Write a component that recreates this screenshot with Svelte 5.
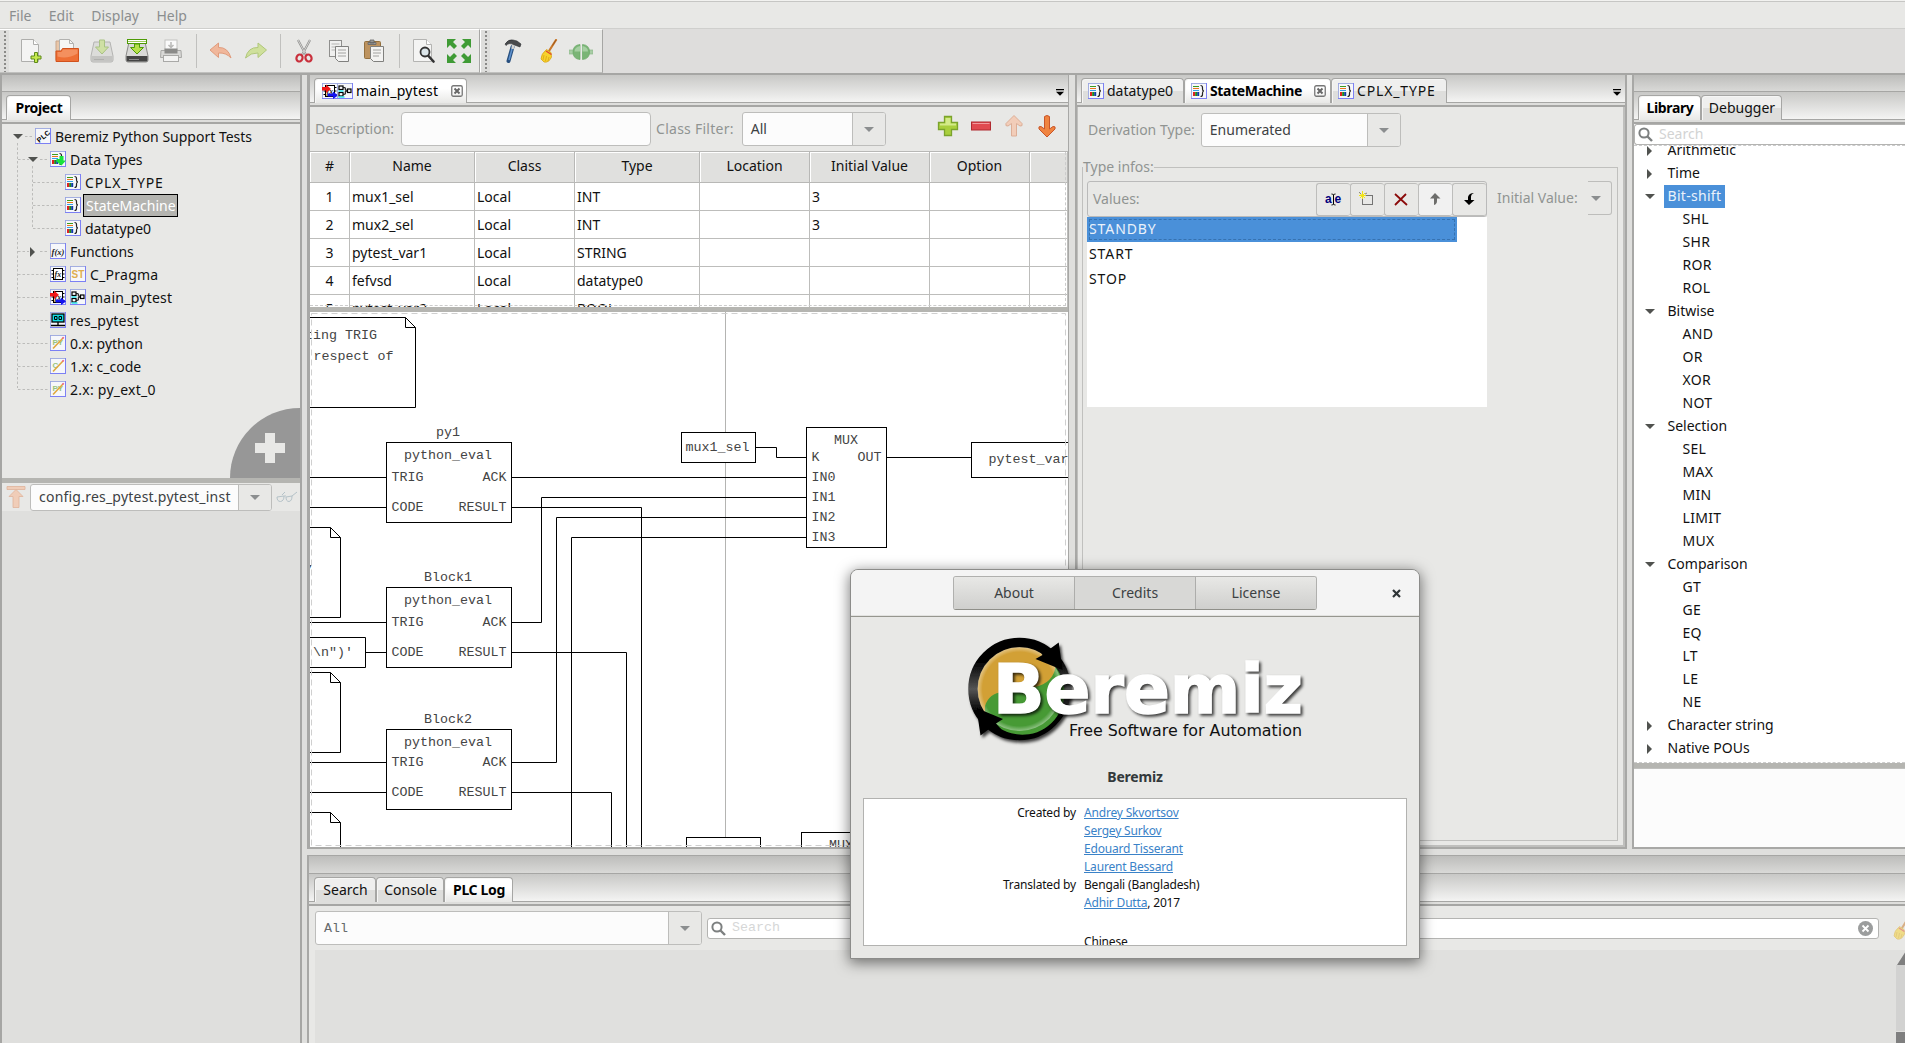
<script>
  const menus = ['File', 'Edit', 'Display', 'Help'];
  const mainTools = ['new', 'open', 'save', 'saveas', 'print', '|', 'undo', 'redo', '|', 'cut', 'copy', 'paste', '|', 'find', 'full'];
  const buildTools = ['hammer', 'brush', 'connect'];

  const project = [
    { level: 0, arrow: 'down', icons: ['plc'], text: 'Beremiz Python Support Tests' },
    { level: 1, arrow: 'down', icons: ['types'], text: 'Data Types' },
    { level: 2, icons: ['type'], text: 'CPLX_TYPE', spread: 'wide' },
    { level: 2, icons: ['type'], text: 'StateMachine', selected: true },
    { level: 2, icons: ['type'], text: 'datatype0' },
    { level: 1, arrow: 'right', icons: ['fx'], text: 'Functions' },
    { level: 1, icons: ['fb', 'st'], text: 'C_Pragma', spread: 'loose' },
    { level: 1, icons: ['prog', 'fbd'], text: 'main_pytest', spread: 'loose' },
    { level: 1, icons: ['res'], text: 'res_pytest', spread: 'loose' },
    { level: 1, icons: ['py'], text: '0.x: python' },
    { level: 1, icons: ['c'], text: '1.x: c_code' },
    { level: 1, icons: ['py'], text: '2.x: py_ext_0', spread: 'loose' }
  ];

  const columns = ['#', 'Name', 'Class', 'Type', 'Location', 'Initial Value', 'Option', ''];
  const variables = [
    ['1', 'mux1_sel', 'Local', 'INT', '', '3', '', ''],
    ['2', 'mux2_sel', 'Local', 'INT', '', '3', '', ''],
    ['3', 'pytest_var1', 'Local', 'STRING', '', '', '', ''],
    ['4', 'fefvsd', 'Local', 'datatype0', '', '', '', ''],
    ['5', 'pytest_var2', 'Local', 'BOOL', '', '', '', '']
  ];

  const values = ['STANDBY', 'START', 'STOP'];
  const valueTools = ['rename', 'add', 'remove', 'up', 'down'];

  const library = [
    { arrow: 'right', text: 'Arithmetic' },
    { arrow: 'right', text: 'Time' },
    { arrow: 'down', text: 'Bit-shift', selected: true },
    { text: 'SHL' }, { text: 'SHR' }, { text: 'ROR' }, { text: 'ROL' },
    { arrow: 'down', text: 'Bitwise' },
    { text: 'AND' }, { text: 'OR' }, { text: 'XOR' }, { text: 'NOT' },
    { arrow: 'down', text: 'Selection' },
    { text: 'SEL' }, { text: 'MAX' }, { text: 'MIN' }, { text: 'LIMIT' }, { text: 'MUX' },
    { arrow: 'down', text: 'Comparison' },
    { text: 'GT' }, { text: 'GE' }, { text: 'EQ' }, { text: 'LT' }, { text: 'LE' }, { text: 'NE' },
    { arrow: 'right', text: 'Character string' },
    { arrow: 'right', text: 'Native POUs' }
  ];

  const blocks = [
    { name: 'py1', y: 442.5, trig: 477.5, code: 507.5 },
    { name: 'Block1', y: 587.5, trig: 622.5, code: 652.5 },
    { name: 'Block2', y: 729.5, trig: 762.5, code: 792.5 }
  ];

  const credits = [
    { role: 'Created by', link: 'Andrey Skvortsov' },
    { link: 'Sergey Surkov' },
    { link: 'Edouard Tisserant' },
    { link: 'Laurent Bessard' },
    { role: 'Translated by', plain: 'Bengali (Bangladesh)' },
    { link: 'Adhir Dutta', plain: ', 2017' },
    {},
    { plain: 'Chinese' }
  ];
</script>

{#snippet broom()}
  <path d="M20 1 L13 12" stroke="#c8782a" stroke-width="2.2" stroke-linecap="round" />
  <path d="M20 1 L16.5 6.5" stroke="#a05a1c" stroke-width="1" />
  <path d="M10.5 10.5 L15 13.5 L15.5 18 Q13 24 8 23 L5 20 Q5 15 10.5 10.5Z" fill="#f7d22c" stroke="#d8a413" stroke-width=".8" />
  <path d="M10 12 L15.5 15.5" stroke="#d43" stroke-width="1.3" />
  <path d="M8 16 L7 21 M10.5 17 L9.5 22 M13 18 L12 22" stroke="#d9a515" stroke-width=".8" />
{/snippet}

{#snippet floppy(faded)}
  <path d="M4 3 h16 l3 14 v4 q0 2 -2 2 H3 q-2 0 -2 -2 v-4Z" fill={faded ? '#dcdcda' : '#d9d9d7'} stroke={faded ? '#b4b4b2' : '#8a8a88'} />
  <path d="M1.5 17 h21 v4 q0 1.5 -1.5 1.5 H3 q-1.500 0 -1.500 -1.500Z" fill={faded ? '#c4c4c2' : '#444'} />
  <path d="M4 20.500 h10" stroke={faded ? '#b0b0ae' : '#888'} />
  {#if !faded}<rect x="2.500" y=".5" width="19" height="4" fill="#fff" stroke="#4e9a06" /><path d="M3 2.500 h18" stroke="#9cc95c" stroke-width="1" />{/if}
  <path d={faded ? 'M9.500 1 h5 v7 h4 l-6.500 7 l-6.500 -7 h4Z' : 'M9.500 5 h5 v3.500 h4 l-6.500 6.500 l-6.500 -6.500 h4Z'} fill={faded ? '#cfe0a4' : '#b5e04a'} stroke={faded ? '#a9c283' : '#4e9a06'} />
{/snippet}

{#snippet tool(name)}
  <svg class="tool" viewBox="0 0 24 24" fill="none">
    {#if name === 'new'}
      <path d="M1.500 .5 h12 l5 5 v17 h-17Z" fill="#f4f4f3" stroke="#aeaeac" /><path d="M13.500 .5 v5 h5" fill="#fff" stroke="#aeaeac" />
      <path d="M14.500 13.500 h3 v3.500 h3.500 v3 h-3.500 v3.500 h-3 v-3.500 h-3.500 v-3 h3.500Z" fill="#c5e84e" stroke="#5e8a1a" />
    {:else if name === 'open'}
      <path d="M1 21 V2 h6 l2 2 h3" fill="#e9c6a8" stroke="#c9a58a" /><path d="M4.500 .5 h10 l4 4 v8 H4.500Z" fill="#f6f6f5" stroke="#b2b2b0" /><path d="M14.500 .5 v4 h4" stroke="#b2b2b0" />
      <path d="M1 22.500 V12 h5 l1.500 -2.500 H23.500 v13Z" fill="#ee6f35" stroke="#d1521d" /><path d="M8 10.500 H22.500 v4 q-10 6 -20 3 v-4.500 h4Z" fill="#f9a77c" opacity=".6" />
    {:else if name === 'save'}{@render floppy(true)}
    {:else if name === 'saveas'}{@render floppy(false)}
    {:else if name === 'print'}
      <rect x="5" y="1" width="12" height="11" fill="#fafafa" stroke="#c2c2c0" /><path d="M11 3 v5 m-2.500 -2 l2.500 2.500 l2.500 -2.500" stroke="#b8b8b6" stroke-width="1.500" />
      <path d="M1 11.500 h20 l.5 7 h-21Z" fill="#d8d8d6" stroke="#a9a9a7" /><rect x="4.500" y="9.500" width="13" height="5" fill="#8b8b89" /><rect x="3.500" y="16.500" width="15" height="6" fill="#f3f3f2" stroke="#a9a9a7" />
    {:else if name === 'undo'}
      <path d="M1 11 L9.500 4 v4.500 Q19 8 22 19 Q17 13.500 9.500 14 V18.500Z" fill="#f0b79b" stroke="#e09b7c" stroke-linejoin="round" />
    {:else if name === 'redo'}
      <path d="M22.500 11 L14 4 v4.500 Q4 8 1.500 19 Q7 13.500 14 14 V18.500Z" fill="#cfe09c" stroke="#b0c77a" stroke-linejoin="round" />
    {:else if name === 'cut'}
      <path d="M5 1 L13.500 17 M17 1 L8.500 17" stroke="#8d8d8b" stroke-width="2.200" /><path d="M5 1 L13 16 M17 1 L9 16" stroke="#e6e6e4" stroke-width=".8" />
      <ellipse cx="6.500" cy="19" rx="3" ry="3.500" transform="rotate(25 6.500 19)" stroke="#c9303c" stroke-width="2.200" /><ellipse cx="15.500" cy="19" rx="3" ry="3.500" transform="rotate(-25 15.500 19)" stroke="#c9303c" stroke-width="2.200" />
    {:else if name === 'copy'}
      <rect x="1.500" y="1.500" width="12" height="16" fill="#f0f0ef" stroke="#8f8f8d" /><path d="M3.500 5 h8 M3.500 8 h8 M3.500 11 h8" stroke="#b5b5b3" />
      <path d="M7.500 7.500 h13 v15 h-10 l-3 -3Z" fill="#f3f3f2" stroke="#80807e" /><path d="M10 11 h8 M10 14 h8 M10 17 h8" stroke="#a2a2a0" />
    {:else if name === 'paste'}
      <rect x="1.500" y="2.500" width="16" height="17" rx="1" fill="#bd935f" stroke="#93703f" /><path d="M5 3.500 h8 v2 H5Z M7 1 h4 v3 H7Z" fill="#989896" stroke="#666" stroke-width=".8" />
      <path d="M7.500 7.500 h13 v15 h-10 l-3 -3Z" fill="#f3f3f2" stroke="#80807e" /><path d="M10 11 h8 M10 14 h8 M10 17 h6" stroke="#a2a2a0" />
    {:else if name === 'find'}
      <path d="M1.500 .5 h13 l5 5 v17 h-18Z" fill="#f4f4f3" stroke="#b4b4b2" /><path d="M14.500 .5 v5 h5" fill="#fff" stroke="#b4b4b2" />
      <circle cx="13" cy="13" r="4.500" fill="#dce6ea" stroke="#333" stroke-width="1.800" /><path d="M16.500 17 L21.500 22.500" stroke="#333" stroke-width="2.600" stroke-linecap="round" />
    {:else if name === 'full'}
      <path d="M0 0 h9 l-3 3 l4 4 l-3 3 l-4 -4 l-3 3Z M24 0 v9 l-3 -3 l-4 4 l-3 -3 l4 -4 l-3 -3Z M0 24 v-9 l3 3 l4 -4 l3 3 l-4 4 l3 3Z M24 24 h-9 l3 -3 l-4 -4 l3 -3 l4 4 l3 -3Z" fill="#3f9b35" />
    {:else if name === 'hammer'}
      <path d="M11.500 8 L7.500 22" stroke="#28507f" stroke-width="4" stroke-linecap="round" /><path d="M11 10 L8 21" stroke="#5f93cf" stroke-width="1.500" /><path d="M12.500 4 L11.500 10" stroke="#d4d4d2" stroke-width="2.500" />
      <path d="M4 5 Q7 0 12 1 L16 2 L20 5 L19 8 L13.500 6 Q8 3 5 6.500Z" fill="#484a4c" stroke="#2c2e30" stroke-width=".6" />
    {:else if name === 'brush'}{@render broom()}
    {:else}
      <path d="M0 11 h5 v4 H0Z M19 11 h5 v4 h-5Z" fill="#a8cda5" stroke="#8db98a" stroke-width=".7" />
      <path d="M11 5.500 v15 Q4 20 4 13 Q4 6 11 5.500Z M13.500 5.500 v15 Q20.500 20 20.500 13 Q20.500 6 13.500 5.500Z" fill="#7ab576" stroke="#69a865" stroke-width=".7" /><path d="M11 7 Q5.500 8 5.500 12.500 H11Z M13.500 7 Q19 8 19 12.500 H13.500Z" fill="#a5cfa2" />
    {/if}
  </svg>
{/snippet}

{#snippet mini(name)}
  <svg class="mini" viewBox="0 0 16 16" fill="none">
    <rect x=".5" y=".5" width="15" height="15" fill="#f6f7fa" stroke="#7c80f4" /><path d="M.5 15 V.5 H15" stroke="#a3aee0" />
    {#if name === 'plc'}
      <text class="plc" x="-7.500" y="3" textLength="15" transform="translate(8 8) rotate(-40)">PLC</text>
    {:else if name === 'type' || name === 'types'}
      <path d="M2 3.500 h6" stroke="#3b9a1e" /><path d="M2 5.500 h6" stroke="#e8761c" /><path d="M2 7.500 h6" stroke="#35a0e8" />
      <rect x="2" y="9" width="2.200" height="4" fill="#d22" /><rect x="4.200" y="9" width="2" height="4" fill="#1d8a1d" /><rect x="6.200" y="9" width="2" height="4" fill="#113ba5" />
      <path d="M9.500 2.500 q2 0 2 2 v1.500 q0 2 1.500 2 q-1.500 0 -1.500 2 v1.500 q0 2 -2 2" stroke="#222" stroke-width="1.200" />
      {#if name === 'types'}<path d="M6.500 8 h3 v-3 h4 v4.500 h2.500 l-4.500 5 l-5 -4Z" fill="#17e33c" />{/if}
    {:else if name === 'fx'}
      <text class="fx" x="1.500" y="11.500" textLength="13" lengthAdjust="spacingAndGlyphs">f(x)</text>
    {:else if name === 'fb' || name === 'prog'}
      <rect x="3.500" y="2.500" width="9" height="11" fill="#fff" stroke="#000" /><path d="M1.500 4.500 h2 M1.500 8 h2 M1.500 11.500 h2 M12.500 4.500 h2 M12.500 8 h2 M12.500 11.500 h2" stroke="#000" /><text class="fxs" x="4.500" y="10.500">fx</text>
      {#if name === 'prog'}<path d="M0 4 h4 V1.500 l5 4.500 l-5 4 V7.500 H0Z" fill="#f01818" /><path d="M6 10.500 h5 v-2 l5 4 l-5 3.500 v-2.500 H6Z" fill="#1414f0" />{/if}
    {:else if name === 'st'}
      <text class="st" x="1.500" y="12">ST</text>
    {:else if name === 'fbd'}
      <rect x="2" y="3" width="4" height="3.500" stroke="#000" stroke-width="1.200" /><rect x="2" y="9.500" width="4" height="3.500" fill="#fff" stroke="#000" stroke-width="1.200" /><path d="M1.500 8 h5 M1.500 14 h6" stroke="#2ee6ee" stroke-width="1.500" /><rect x="10.500" y="6" width="3.500" height="3.500" stroke="#000" stroke-width="1.200" /><path d="M6 4.700 h2.300 v2.500 h2 M6 11.200 h2.300 v-3 h2" stroke="#000" />
    {:else if name === 'res'}
      <rect x="2" y="2" width="12" height="8" fill="#13dce4" stroke="#000" stroke-width="1.300" /><path d="M4.500 4.500 h2.500 v3 h-2.500Z M9 4.500 h2.500 v3 h-2.500Z" stroke="#000" /><path d="M8 10 v3.500 M1 13.500 h14" stroke="#000" stroke-width="1.300" />
    {:else}
      <text class="py" x="2.500" y="9.500">{name === 'py' ? 'PY' : 'C'}</text><path d="M3 13.500 L13 3" stroke="#e0a83c" stroke-width="1.600" /><path d="M12.500 3.500 l1.200 -1.300" stroke="#e58" stroke-width="1.600" />
    {/if}
  </svg>
{/snippet}

{#snippet closeBox()}
  <svg class="close-box" viewBox="0 0 12 12" fill="none"><rect x=".75" y=".75" width="10.500" height="10.500" rx="1.500" stroke="#777" stroke-width="1.300" /><path d="M3.500 3.500 l5 5 M8.500 3.500 l-5 5" stroke="#666" stroke-width="2" /></svg>
{/snippet}

{#snippet lens()}
  <svg class="lens" viewBox="0 0 15 15" fill="none"><circle cx="6" cy="6" r="4.600" stroke="#7d8080" stroke-width="2" /><path d="M9.500 9.500 L14 14" stroke="#7d8080" stroke-width="2.400" /></svg>
{/snippet}

{#snippet tabMenu()}
  <svg class="tab-menu" viewBox="0 0 8 7"><path d="M0 0 h8 v1.300 H0Z M0 2.700 h8 L4 6.700Z" /></svg>
{/snippet}

{#snippet note(right, top, bottom)}
  <path class="node" d="M300 {top} H{right - 10} L{right} {top + 10} V{bottom} H300 M{right - 10} {top} v10 h10" />
{/snippet}

<div class="app">
  <nav class="menubar">
    {#each menus as m}<span>{m}</span>{/each}
  </nav>

  <div class="toolbars">
    <div class="toolbar first">
      <i class="grip"></i>
      {#each mainTools as t}
        {#if t === '|'}<i class="sep"></i>{:else}{@render tool(t)}{/if}
      {/each}
    </div>
    <div class="toolbar second">
      <i class="grip"></i>
      {#each buildTools as t}{@render tool(t)}{/each}
    </div>
  </div>

  <div class="workspace">
    <aside class="left">
      <div class="caption"></div>
      <div class="tabs low"><span class="tab active bold t-proj">Project</span></div>
      <div class="tree">
        <svg class="guides" width="80" height="300" viewBox="0 0 80 300" fill="none">
          <path d="M15.500 19 V264 M23 12.500 h9 M30.500 42 V104 M31 58.500 h32 M31 81.500 h32 M31 104.500 h32 M38 35.500 h9 M16 35.500 h11 M16 127.500 h11 M38 127.500 h9 M16 150.500 h31 M16 173.500 h31 M16 196.500 h31 M16 219.500 h31 M16 242.500 h31 M16 265.500 h31" />
        </svg>
        {#each project as row}
          <div class="node-row l{row.level}">
            <span class="twist">{#if row.arrow}<i class={row.arrow}></i>{/if}</span>
            <span class="icons">{#each row.icons as ic}{@render mini(ic)}{/each}</span>
            <span class="label {row.spread ?? ''}" class:picked={row.selected}>{row.text}</span>
          </div>
        {/each}
        <svg class="add-corner" width="70" height="70" viewBox="0 0 70 70"><path d="M0 70 A70 70 0 0 1 70 0 V70Z" fill="#979797" /><path d="M35 25 h10 v10 h10 v10 h-10 v10 h-10 v-10 h-10 v-10 h10Z" fill="#e8e8e6" /></svg>
      </div>
      <div class="hsash"></div>
      <div class="instance">
        <svg width="20" height="24" viewBox="0 0 20 24"><path d="M1 1.500 h18 v3 H1Z M10 4.500 l7 7 h-4 v11 h-6 v-11 h-4Z" fill="#f0cdb8" stroke="#dfb39b" stroke-width=".8" /></svg>
        <div class="combo inst"><span class="val">config.res_pytest.pytest_inst</span><span class="drop"><i class="down"></i></span></div>
        <svg width="22" height="12" viewBox="0 0 22 12" fill="none" stroke="#b5c2c8"><path d="M1 6 l7 -1 q0 5 -3.500 5.500 q-3.500 0 -3.500 -4.500Z M10 6 l6 -1 q0 5 -3 5.500 q-3 0 -3 -4.500Z M8 5 h2 M16 5 L21 1 M6 4 L9 1" /></svg>
      </div>
    </aside>

    <div class="right-side">
      <div class="top-row">
        <section class="pane editor">
          <div class="tabs">
            <span class="tab active main-tab"><span class="pair">{@render mini('prog')}{@render mini('fbd')}</span><span class="loose">main_pytest</span>{@render closeBox()}</span>
            {@render tabMenu()}
          </div>
          <div class="var-bar">
            <span class="dim">Description:</span><div class="field desc"></div>
            <span class="dim loose">Class Filter:</span>
            <div class="combo filter"><span class="val">All</span><span class="drop"><i class="down"></i></span></div>
            <div class="var-tools">
              <svg width="22" height="22" viewBox="0 0 22 22"><path d="M7.500 1.500 h7 v6 h6 v7 h-6 v6 h-7 v-6 h-6 v-7 h6Z" fill="#a9cf3d" stroke="#7ba32d" stroke-width="1.300" /><path d="M8.500 3 h5 v5.500 h5.500 v2 H3 v-2 h5.500Z" fill="#d3ea8a" /></svg>
              <svg width="22" height="22" viewBox="0 0 22 22"><rect x="1.500" y="7" width="19" height="8" fill="#e04a50" stroke="#b02a30" /><path d="M2.500 8.500 h17" stroke="#f29a9d" /></svg>
              <svg width="22" height="22" viewBox="0 0 22 22"><path d="M11 .5 L19 8.500 q1 3 -2 2.500 L13.500 8.500 V21 h-5 V8.500 L5 11 q-3 .5 -2 -2.500Z" fill="#f2cdb9" stroke="#dcae97" /></svg>
              <svg width="22" height="22" viewBox="0 0 22 22"><path d="M11 22 L19 14 q1 -3 -2 -2.500 L13.500 14 V1.500 q-2.500 -2 -5 0 V14 L5 11.500 q-3 -.5 -2 2.500Z" fill="#f08440" stroke="#c8562a" /></svg>
            </div>
          </div>
          <div class="grid">
            {#each columns as c}<div class="head">{c}</div>{/each}
            {#each variables as row}{#each row as cell, i}<div class="cell" class:num={i === 0}>{cell}</div>{/each}{/each}
          </div>
          <div class="hsash"></div>
          <svg class="diagram" width="758" height="535" viewBox="310 312 758 535" fill="none">
            <path d="M725.500 312 V838" stroke="#b4b4b2" />
            {@render note(415.5, 317.5, 407.5)}
            {@render note(340.5, 527.5, 617.5)}
            {@render note(340.5, 672.5, 752.5)}
            {@render note(340.5, 812.5, 860)}
            <path class="node" d="M300 637.500 H365.500 V667.500 H300 M365.500 652.500 H386.500 M300 477.500 H386.500 M300 507.500 H386.500 M300 622.500 H386.500 M300 762.500 H386.500 M300 792.500 H386.500" />
            <path class="wire" d="M511.500 477.500 H806.500 M511.500 507.500 H641.500 V850 M511.500 622.500 H541.500 V497.500 H806.500 M511.500 652.500 H626.500 V850 M511.500 762.500 H556.500 V517.500 H806.500 M511.500 792.500 H611.500 V850 M571.500 850 V537.500 H806.500 M755.500 447.500 H776.500 V457.500 H806.500 M886.500 457.500 H971.500" />
            <text x="305" y="338.500">ting TRIG</text><text x="313.500" y="360">respect of</text>
            <text x="307" y="567">,</text><text x="313" y="656">\n")'</text>
            {#each blocks as b}
              <rect class="node" x="386.500" y={b.y} width="125" height="80" />
              <text class="mid" x="448" y={b.y - 7}>{b.name}</text><text class="mid" x="448" y={b.y + 16}>python_eval</text>
              <text x="391.500" y={b.trig + 3.5}>TRIG</text><text class="end" x="506.500" y={b.trig + 3.5}>ACK</text>
              <text x="391.500" y={b.code + 3.5}>CODE</text><text class="end" x="506.500" y={b.code + 3.5}>RESULT</text>
            {/each}
            <rect class="node" x="681.500" y="432.500" width="74" height="30" /><text x="685.500" y="450.500">mux1_sel</text>
            <rect class="node" x="806.500" y="427.500" width="80" height="120" /><text class="mid" x="846" y="443.500">MUX</text>
            <text x="811.500" y="460.500">K</text><text class="end" x="881.500" y="460.500">OUT</text>
            {#each [0, 1, 2, 3] as n}<text x="811.500" y={480.5 + n * 20}>IN{n}</text>{/each}
            <rect class="node" x="971.500" y="442.500" width="120" height="35" /><text x="988.500" y="462.500">pytest_var</text>
            <rect class="node" x="686.500" y="837.500" width="74" height="30" /><rect class="node" x="801.500" y="832.500" width="80" height="60" /><text x="829" y="848.500">MUX</text>
            <rect class="overflow" x="311.500" y="313.500" width="754" height="532" />
          </svg>
        </section>

        <section class="pane types">
          <div class="tabs">
            <span class="tab t-a">{@render mini('type')}<span>datatype0</span></span>
            <span class="tab active bold t-b">{@render mini('type')}<span>StateMachine</span>{@render closeBox()}</span>
            <span class="tab t-c">{@render mini('type')}<span class="wide">CPLX_TYPE</span></span>
            {@render tabMenu()}
          </div>
          <div class="type-body">
            <div class="derive"><span class="dim">Derivation Type:</span><div class="combo enumr"><span class="val">Enumerated</span><span class="drop"><i class="down"></i></span></div></div>
            <fieldset>
              <legend class="dim">Type infos:</legend>
              <div class="values">
                <div class="values-bar">
                  <span class="dim">Values:</span>
                  {#each valueTools as t}
                    <span class="vbtn" class:off={t === 'up'}>
                      <svg width="18" height="16" viewBox="0 0 18 16" fill="none">
                        {#if t === 'rename'}<text class="ren" x="1" y="12">a</text><text class="ren" x="10.500" y="12">e</text><path d="M7.500 3 h1 l1 1 l1 -1 h1 M9.500 4 v9 M7.500 14 h1 l1 -1 l1 1 h1" stroke="#000" />
                        {:else if t === 'add'}<rect x="4.500" y="4.500" width="10" height="9" stroke="#000" stroke-dasharray="1 1" /><path d="M1.500 2 L7 7 M7 2 L2 7 M4.500 0 v8 M1 4.500 h7" stroke="#f2e410" stroke-width="1" /><path d="M1 1 l2 2 M7 3 l2 -1" stroke="#888" />
                        {:else if t === 'remove'}<path d="M3 3 L15 14 M14 3 L3 14" stroke="#8b0a0a" stroke-width="1.800" />
                        {:else if t === 'up'}<path d="M9 2 L14.500 7.500 H11 V10 q0 3 -3 4 V7.500 H4Z" fill="#6d6d6b" />
                        {:else}<path d="M9 14 L14.500 9 H11 V6 q0 -3 3 -4 q-5 0 -6 4 V9 H4Z" fill="#000" />{/if}
                      </svg>
                    </span>
                  {/each}
                </div>
                <div class="value-list">
                  {#each values as v, i}<div class="value" class:sel={i === 0}>{v}</div>{/each}
                </div>
              </div>
              <span class="dim initial">Initial Value:</span>
              <span class="stub"><i class="down"></i></span>
            </fieldset>
          </div>
        </section>

        <aside class="pane library">
          <div class="caption"></div>
          <div class="tabs low"><span class="tab active bold t-lib">Library</span><span class="tab t-deb">Debugger</span></div>
          <div class="lib-search">{@render lens()}<span>Search</span></div>
          <div class="lib-tree">
            {#each library as row}
              <div class="lib-row"><span class="twist">{#if row.arrow}<i class={row.arrow}></i>{/if}</span><span class="lib-label" class:child={!row.arrow} class:sel={row.selected}>{row.text}</span></div>
            {/each}
          </div>
          <div class="hsash"></div>
          <div class="lib-info"></div>
        </aside>
      </div>

      <section class="bottom">
        <div class="caption"></div>
        <div class="tabs low"><span class="tab b-a">Search</span><span class="tab b-b">Console</span><span class="tab active bold b-c">PLC Log</span></div>
        <div class="log-bar">
          <div class="combo level"><span class="val mono">All</span><span class="drop"><i class="down"></i></span></div>
          <div class="log-search">{@render lens()}<span class="mono ghost">Search</span>
            <svg class="clear" width="15" height="15" viewBox="0 0 15 15"><circle cx="7.500" cy="7.500" r="7.500" fill="#9b9d9d" /><path d="M4.500 4.500 l6 6 M10.500 4.500 l-6 6" stroke="#fff" stroke-width="1.800" /></svg>
          </div>
          <svg class="broom" width="24" height="24" viewBox="0 0 24 24" fill="none">{@render broom()}</svg>
        </div>
        <div class="log">
          <svg width="9" height="93" viewBox="0 0 9 93"><rect y="15" width="9" height="66" fill="#d2d2d1" /><path d="M1 15 L10 1 V15Z M0 82 h9 v11 H0Z" fill="#7f7f7f" /></svg>
        </div>
      </section>
    </div>
  </div>

  <div class="dialog">
    <header>
      <div class="switch"><span>About</span><span class="on">Credits</span><span>License</span></div>
      <svg class="x" width="9" height="9" viewBox="0 0 9 9"><path d="M1 1 L8 8 M8 1 L1 8" stroke="#2e3436" stroke-width="2.200" /></svg>
    </header>
    <div class="brand">
      <svg width="350" height="124" viewBox="960 630 350 124">
        <defs>
          <filter id="drop" x="-20%" y="-20%" width="150%" height="150%"><feDropShadow dx="2" dy="2.500" stdDeviation="1.700" flood-color="#000" flood-opacity=".75" /></filter>
          <linearGradient id="ring" x1="0" y1="0" x2="0" y2="1"><stop offset="0" /><stop offset=".2" /><stop offset=".5" stop-color="#555" /><stop offset=".75" /><stop offset="1" /></linearGradient>
          <radialGradient id="glow"><stop offset=".88" stop-color="#fff" stop-opacity="0" /><stop offset="1" stop-color="#fff" stop-opacity=".4" /></radialGradient>
          <clipPath id="outside"><path d="M1035 630 H1310 V754 H1035Z" /></clipPath>
        </defs>
        <g filter="url(#drop)">
          <circle cx="1019.500" cy="689" r="46.500" fill="#d2a036" stroke="url(#ring)" stroke-width="9.500" />
          <path d="M1055.500 667 Q1053 683 1035 687 L1003 692 Q989 693 985 706 V712 A42 42 0 1 0 1055.500 667Z" fill="#479a36" />
          <circle cx="1019.500" cy="689" r="42" fill="url(#glow)" />
          <path d="M1046 648 L1050.500 648.500 L1058.700 642.500 L1062.500 670 L1035.500 659 L1042.500 655 L1039 650Z M993 730 L989 729 L980.500 735.500 L976.500 708 L1003 719 L996 723.500 L1001 729Z" fill="#000" />
        </g>
        <text class="logo" x="993" y="713" textLength="310" lengthAdjust="spacingAndGlyphs"><tspan>B</tspan><tspan>eremiz</tspan></text>
        <text class="slogan" x="1069" y="735.500" textLength="233" lengthAdjust="spacingAndGlyphs">Free Software for Automation</text>
      </svg>
      <strong>Beremiz</strong>
    </div>
    <div class="credits">
      {#each credits as c}
        <span class="role">{c.role ?? ''}</span><span class="who">{#if c.link}<a href="#top">{c.link}</a>{/if}{c.plain ?? ''}</span>
      {/each}
    </div>
  </div>
</div>

<style>
  :global(body) { margin: 0; overflow: hidden; }
  .app { position: relative; width: 1905px; height: 1043px; overflow: hidden; display: flex; flex-direction: column; background: #dfdfdd; font: 14px/20px "Noto Sans", sans-serif; color: #111; box-sizing: border-box; }
  .app :global(*) { box-sizing: border-box; }
  svg { flex: none; display: block; }
  span { white-space: nowrap; }
  .dim { color: #909492; }
  .bold { font-weight: 700; letter-spacing: -.35px; }
  .mono { font-family: "Liberation Mono", monospace; font-size: 13.33px; }
  .loose { letter-spacing: .25px; }
  .wide { letter-spacing: .85px; }

  .menubar { flex: none; height: 29px; display: flex; gap: 17.400px; padding: 6px 0 0 9px; background: #e8e8e6; color: #8b8e8f; border-bottom: 1px solid #cfcfcd; box-shadow: inset 0 1px #f2f2f0, inset 0 2px #c6c6c4; }
  .toolbars { flex: none; height: 46px; display: flex; border-bottom: 2px solid #a6a6a4; background: #dedddc; }
  .toolbar { display: flex; align-items: flex-start; padding-top: 9px; background: #e8e8e6; border-top: 1px solid #fff; border-right: 1px solid #a6a6a4; border-bottom: 1px solid #c0c0be; }
  .first { width: 480px; }
  .second { width: 123px; border-left: 1px solid #fff; }
  .grip { width: 9px; height: 42px; margin: -9px 5px 0 0; background: radial-gradient(circle at 5px 2px, #8a8a88 1px, transparent 1.300px) 0 4px / 9px 4px repeat-y, #dededc; }
  .second .grip { margin-right: 5px; }
  .tool { width: 24px; height: 24px; margin: 0 5.500px; }
  .second .tool:last-child { margin-left: 4px; }
  .sep { width: 1px; height: 34px; margin: -5px 6.500px 0; background: #c0c0be; }

  .workspace { flex: 1; min-height: 0; display: flex; gap: 5px; }
  .left { width: 302px; display: flex; flex-direction: column; border: 2px solid #a6a6a4; border-width: 0 2px; }
  .caption { flex: none; height: 17px; background: linear-gradient(#bdbdbb, #d9d9d7); border-bottom: 1px solid #a6a6a4; }
  .tabs { flex: none; height: 32px; display: flex; align-items: flex-end; padding: 0 0 4px 4px; background: linear-gradient(#c8c8c6, #f4f4f3 27px, #a6a6a4 27px, #a6a6a4 28px, #dededc 28px, #dededc 30px, #a6a6a4 30px); }
  .low { height: 32px; }
  .tab { display: flex; align-items: center; height: 25px; padding: 0 6px; border: 1px solid #a6a6a4; border-width: 1px 1px 0; border-radius: 4px 4px 0 0; background: linear-gradient(#efefee 50%, #dededc 50%); box-shadow: inset 1px 1px #f6f6f5; color: #111; }
  .tab.active { height: 25px; background: linear-gradient(#fff 40%, #e8e8e6); color: #000; }
  .t-proj, .t-lib, .t-deb, .b-a, .b-b, .b-c { justify-content: center; padding: 0 0 0 1px; }
  .mini { width: 16px; height: 16px; overflow: visible; }
  .mini text { font-family: "Liberation Sans", sans-serif; }
  .mini .plc { font-size: 7px; font-weight: 700; fill: #000; }
  .mini .fx { font: italic 700 9px "Liberation Serif", serif; fill: #222; }
  .mini .fxs { font: italic 700 8px "Liberation Serif", serif; fill: #222; }
  .mini .st { font-size: 10px; font-weight: 700; fill: #dfae50; }
  .mini .py { font-size: 8px; font-weight: 700; fill: #9ac47a; }

  .t-proj { width: 65px; }
  .tree { position: relative; flex: none; height: 354px; padding-top: 1px; background: #e8e8e6; }
  .guides { position: absolute; left: 0; top: 0; }
  .guides path { stroke: #bcbcba; stroke-dasharray: 2.500 2; }
  .node-row { position: relative; display: flex; align-items: flex-start; height: 23px; padding-left: 8px; }
  .node-row .twist { height: 23px; align-items: center; }
  .l1 { padding-left: 23px; }
  .l2 { padding-left: 38px; }
  .twist { width: 15px; display: flex; justify-content: center; }
  .node-row .twist { margin-right: 10px; }
  .icons { display: flex; gap: 4px; margin: 3px 1px 0 0; }
  .label { padding: 0 2px; height: 23px; line-height: 22px; border: 1px solid transparent; }
  .picked { margin-left: 1px; width: 95px; padding-left: 2px; background: #b4b4b0; border-color: #000; color: #fff; }
  i.down { border: 5px solid transparent; border-top-color: #50524f; border-bottom: 0; }
  i.right { border: 5.500px solid transparent; border-left-color: #50524f; border-right: 0; }
  .add-corner { position: absolute; right: 0; bottom: 0; }
  .hsash { flex: none; height: 5px; background: #b5b5b1; }
  .instance { height: 28px; display: flex; align-items: center; gap: 4px; padding-left: 4px; background: #e8e8e6; overflow: hidden; }
  .combo { flex: none; display: flex; height: 34px; border: 1px solid #bdbdbb; border-radius: 3px; background: #fcfcfc; color: #3c4143; overflow: hidden; }
  .combo .val { flex: 1; padding-left: 8px; line-height: 31px; overflow: hidden; }
  .combo .val.mono { color: #666a6c; padding-left: 8px; line-height: 33px; }
  .combo .drop { width: 33px; display: flex; align-items: center; justify-content: center; background: #e8e8e6; border-left: 1px solid #bdbdbb; }
  .drop i.down, .stub i.down { border-top-color: #8b8e8f; }
  .inst { width: 242px; height: 27px; }
  .combo.inst .val { line-height: 24px; letter-spacing: .22px; }

  .right-side { flex: 1; min-width: 0; display: flex; flex-direction: column; }
  .top-row { flex: none; height: 774px; display: flex; }
  .pane { display: flex; flex-direction: column; border: 2px solid #a8a8a6; border-top: 0; }
  .editor { width: 762px; margin-right: 6px; border-left-width: 3px; border-right-width: 1px; overflow: hidden; }
  .main-tab { width: 153px; gap: 3px; padding-left: 7px; }
  .pair { display: flex; }
  .pair .mini + .mini { margin-left: -1px; }
  .close-box { width: 12px; height: 12px; margin-left: auto; }
  .main-tab .close-box { margin-right: -3px; }
  .tab-menu { width: 8px; height: 7px; margin: 0 4px 7px auto; }
  .var-bar { flex: none; height: 44px; display: flex; align-items: center; padding-left: 6px; background: #e8e8e6; }
  .var-bar > .dim:first-child { margin-left: -1px; }
  .field { flex: none; border: 1px solid #bdbdbb; border-radius: 4px; background: #fcfcfc; height: 34px; }
  .desc { width: 250px; margin: 0 5px 0 7px; }
  .filter { width: 144px; margin-left: 8px; }
  .var-tools { display: flex; gap: 11.200px; margin: -6px 0 0 51px; }
  .grid { position: relative; flex: none; height: 156px; overflow: hidden; display: grid; grid-template-columns: 40px 125px 100px 125px 110px 120px 100px 1fr; grid-template-rows: 32px; grid-auto-rows: 28px; align-content: start; background: #fff; }
  .grid::after { content: ""; position: absolute; inset: 1px 2px 1px 0; border: 1px dashed #ccc; border-width: 0 1px 1px 0; }
  .head { background: #e0e0de; text-align: center; line-height: 27px; border: 1px solid #b8b8b6; border-width: 1px 1px 1px 0; box-shadow: inset 1px 1px #fff; }
  .cell { padding-left: 2px; line-height: 27px; border: 1px solid #bdbdbb; border-width: 0 1px 1px 0; white-space: nowrap; }
  .cell.num { text-align: center; padding: 0; }
  .diagram { background: #fff; }
  .diagram text { font: 13.330px "Liberation Mono", monospace; fill: #444; }
  .diagram .mid { text-anchor: middle; }
  .diagram .end { text-anchor: end; }
  .node { fill: #fff; stroke: #000; }
  .wire { stroke: #000; }
  .overflow { stroke: #cfcfcf; stroke-dasharray: 6 4; }

  .types { width: 552px; margin-right: 5px; }
  .types .tab .mini { margin-right: 3px; }
  .t-a { width: 103px; }
  .t-b { width: 147px; }
  .t-c { width: 116px; }
  .types .active .close-box { margin-right: -2px; }
  .type-body { flex: 1; border: 2px solid #bfbfbd; border-left-width: 1px; border-top: 0; background: #e8e8e6; padding: 6px 5px 4px 4px; display: flex; flex-direction: column; }
  .derive { display: flex; align-items: center; gap: 6px; padding-left: 6px; }
  .enumr { width: 200px; }
  fieldset { flex: 1; margin: 10px 0 0; padding: 4px 5px 0 4px; min-width: 0; border: 1px solid #c0c0be; display: flex; align-items: flex-start; }
  legend { padding: 0; margin-left: -4px; }
  .values { width: 400px; }
  .values-bar { display: flex; align-items: center; height: 36px; border: 1px solid #bababa; border-radius: 3px; padding: 1px 0; }
  .values-bar .dim { flex: 1; padding-left: 5px; }
  .vbtn { width: 34px; height: 33px; display: flex; align-items: center; justify-content: center; padding-right: 1px; border: 1px solid #bdbdbb; border-right-width: 0; border-radius: 3px; }
  .off { background: #f1f1f1; }
  .ren { font: 700 12px "Liberation Sans", sans-serif; fill: #00007c; }
  .value-list { height: 190px; background: #fff; }
  .value { width: 370px; height: 25px; padding-left: 2px; line-height: 24px; letter-spacing: .9px; }
  .value.sel { background: #4a90d9; color: #eaf2fb; outline: 1px dashed #3672b1; outline-offset: -3px; }
  .initial { margin: 7px 0 0 10px; }
  .stub { width: 24px; height: 34px; margin: 0 0 0 auto; display: flex; align-items: center; padding-left: 3px; border: 1px solid #bdbdbb; border-left: 0; border-radius: 0 3px 3px 0; }

  .library { flex: 1; min-width: 0; border-right: 0; background: #fff; overflow: hidden; }
  .t-lib { width: 63px; }
  .t-deb { width: 81px; }
  .lib-search { flex: none; height: 21px; display: flex; align-items: center; gap: 6px; padding-left: 3px; background: #fff; border: 1px solid #b4b4b2; border-right: 0; border-radius: 3px 0 0 3px; color: #d2d3d3; }
  .lib-search span { line-height: 17px; margin-top: -2px; }
  .lens { width: 15px; height: 15px; }
  .lib-tree { flex: none; height: 618px; overflow: hidden; border: 1px dashed #ccc; border-width: 1px 0; padding-top: 0; }
  .lib-row { display: flex; height: 23px; align-items: center; padding-left: 8px; position: relative; }
  .lib-row:first-child { margin-top: -7px; }
  .lib-label { line-height: 21px; height: 23px; padding: 0 3.500px; margin-left: 7px; }
  .child { margin-left: 22px; letter-spacing: .3px; }
  .lib-label.sel { background: #4a90d9; color: #eaf2fb; letter-spacing: .3px; }
  .lib-info { flex: 1; background: #fcfcfc; border-top: 1px solid #c0c0be; }

  .bottom { flex: 1; margin-top: 6px; display: flex; flex-direction: column; border-left: 2px solid #a8a8a6; border-top: 1px solid #a6a6a4; }
  .bottom .caption { height: 18px; }
  .bottom .tabs { padding-left: 5px; }
  .b-a { width: 62px; }
  .b-b { width: 68px; }
  .b-c { width: 69px; }
  .log-bar { flex: none; height: 44px; display: flex; align-items: center; padding-left: 6px; background: #e8e8e6; overflow: hidden; }
  .level { width: 387px; }
  .log-search { flex: none; width: 1172px; height: 21px; margin-left: 5px; display: flex; align-items: center; gap: 6px; padding: 0 5px 0 3px; border: 1px solid #b4b4b2; border-radius: 3px; background: #fff; }
  .ghost { color: #d6d7d7; }
  .clear { margin-left: auto; }
  .broom { margin-left: 10px; opacity: .5; }
  .log { flex: 1; margin-left: 6px; display: flex; justify-content: flex-end; background: #e0e0de; box-shadow: -6px 0 #e8e8e6; }

  .dialog { position: absolute; left: 850px; top: 569px; width: 570px; height: 390px; display: flex; flex-direction: column; border: 1px solid #8c8c8a; border-radius: 8px 8px 0 0; background: #e8e8e6; box-shadow: 0 3px 14px 1px rgba(0, 0, 0, .5); overflow: hidden; }
  .dialog header { flex: none; position: relative; height: 47px; display: flex; align-items: center; justify-content: center; background: #f4f4f4; border-bottom: 1px solid #96968f; box-shadow: inset 0 -1px #e2e2e0; }
  .switch { display: flex; width: 364px; height: 34px; border: 1px solid #b0b0ae; border-bottom-color: #8f8f89; border-radius: 3px; overflow: hidden; color: #3c4143; }
  .switch span { flex: 1; text-align: center; line-height: 31px; background: linear-gradient(#e8e8e6, #cfcfcd); }
  .switch .on { background: #d8d8d6; border: 1px solid #adadab; border-width: 0 1px; }
  .x { position: absolute; right: 18px; top: 19px; }
  .brand { display: flex; flex-direction: column; align-items: center; padding-top: 13px; }
  .brand strong { margin-top: 13px; color: #33393b; letter-spacing: -.2px; }
  .logo { font: 700 67px "DejaVu Sans", sans-serif; fill: #fff; stroke: #fff; stroke-width: 1.500px; filter: drop-shadow(2px 2.500px 1.700px rgba(0, 0, 0, .75)); }
  .slogan { font: 16px "DejaVu Sans", sans-serif; fill: #111; }
  .credits { flex: none; width: 544px; height: 148px; margin: 11px 0 0 12px; padding-top: 5px; overflow: hidden; background: #fff; border: 1px solid #b2b2b0; display: grid; grid-template-columns: 212px 1fr; column-gap: 8px; grid-template-rows: repeat(6, 18px) 21px 18px; align-content: start; font-size: 12px; line-height: 18px; letter-spacing: -.18px; }
  .role { text-align: right; }
  .credits a { color: #3a82c8; text-decoration: underline; }
</style>
